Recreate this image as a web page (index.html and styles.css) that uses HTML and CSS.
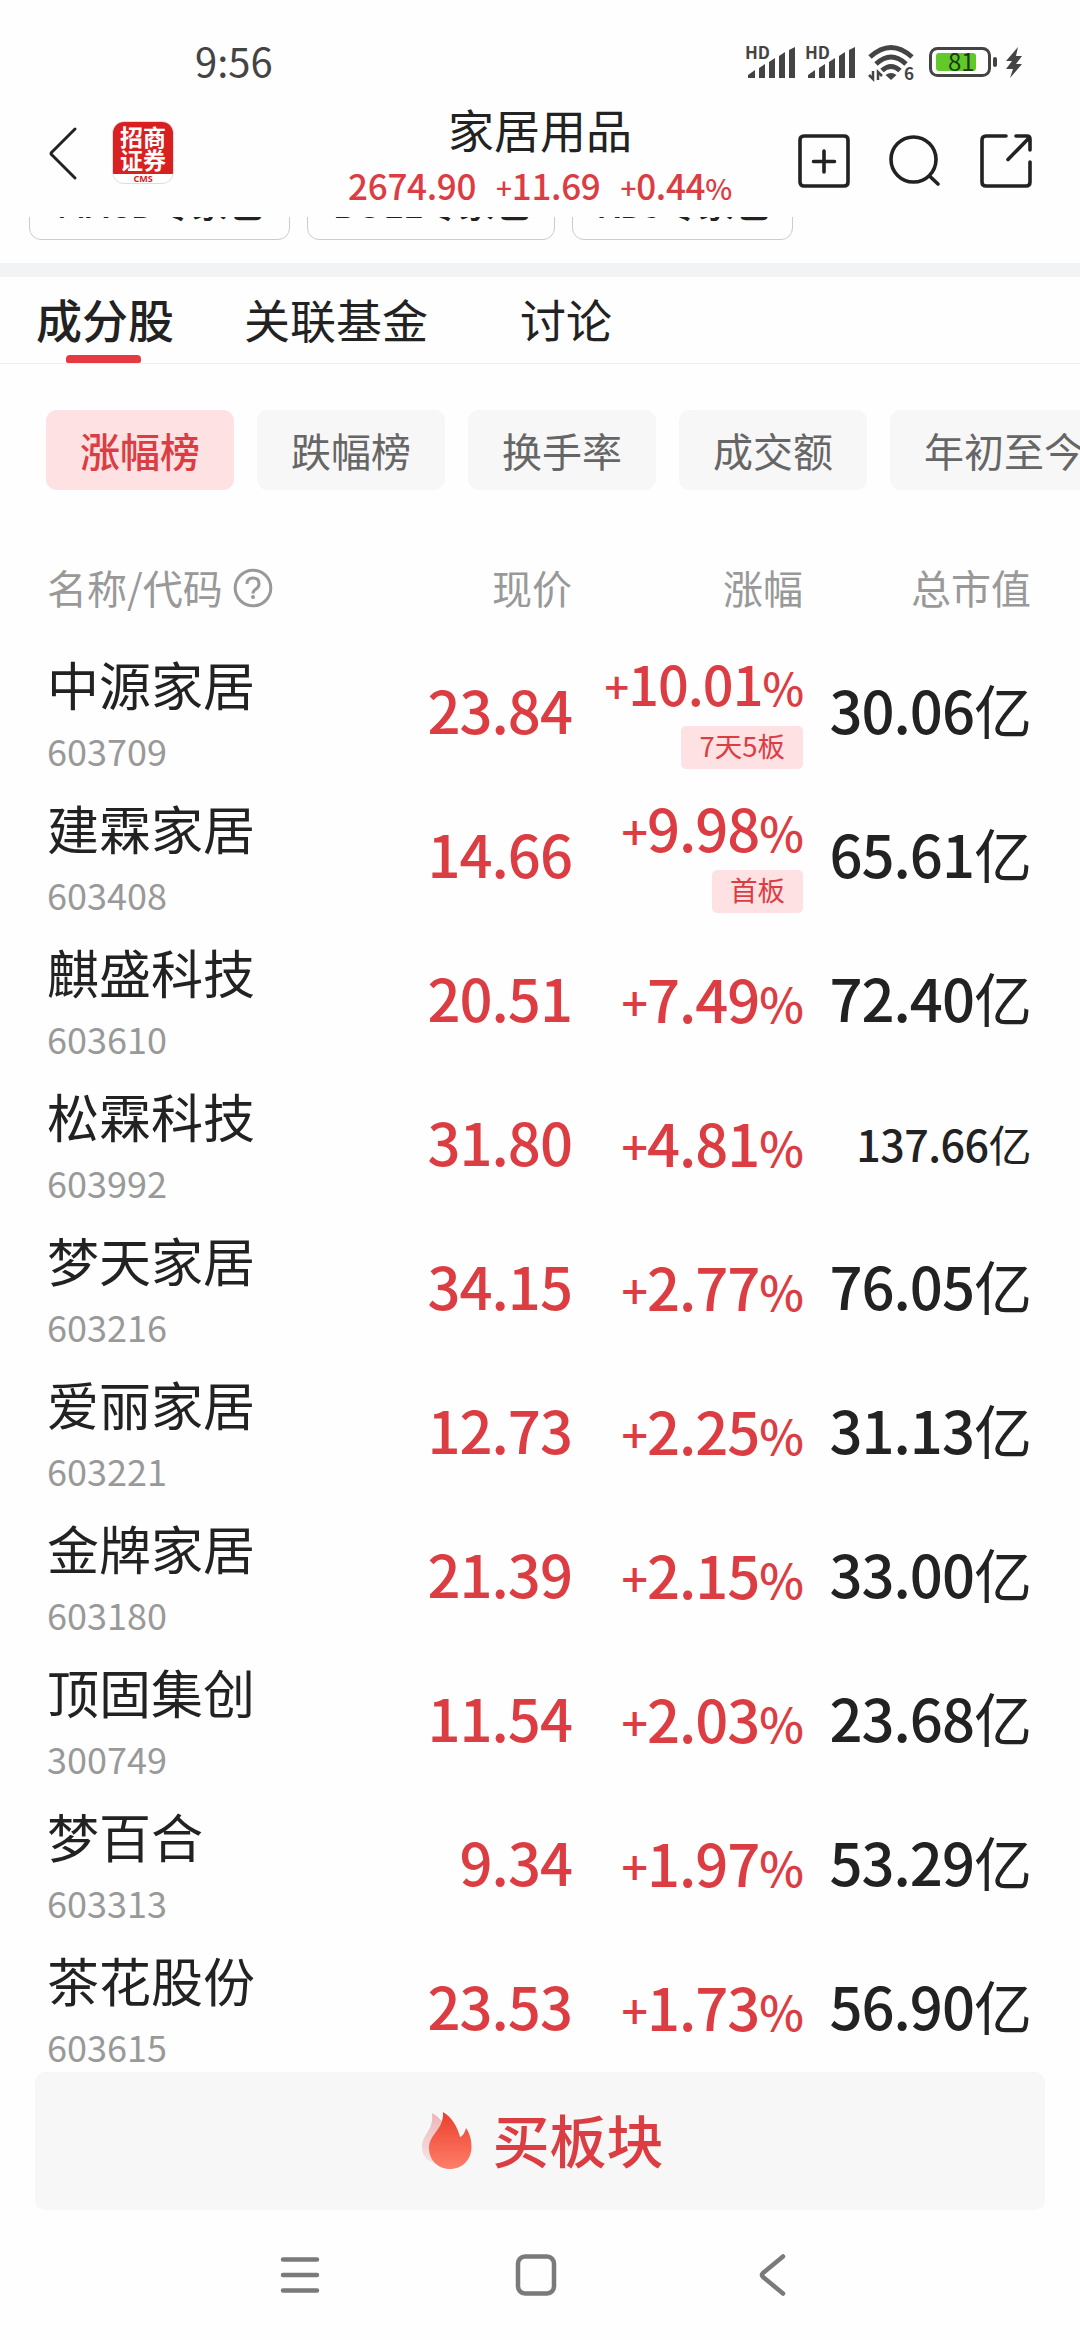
FILE: index.html
```html
<!DOCTYPE html>
<html lang="zh-CN">
<head>
	<meta charset="utf-8">
	<title>家居用品</title>
	<link rel="stylesheet" href="styles.css">
</head>
<body>
	<div class="status">
		<span class="time">9:56</span>
		<div class="status-icons">
			<svg class="signal" width="52" height="40" viewBox="0 0 52 40">
				<text class="hd" x="-2" y="15">HD</text>
				<path d="M1 34v-3l7-5v8zM12 34V24l6-4v14zM22 34V18l6-4v20zM32 34V12l6-4v26zM42 34V6l6-3v31z"/>
			</svg>
			<svg class="signal" width="52" height="40" viewBox="0 0 52 40">
				<text class="hd" x="-2" y="15">HD</text>
				<path d="M1 34v-3l7-5v8zM12 34V24l6-4v14zM22 34V18l6-4v20zM32 34V12l6-4v26zM42 34V6l6-3v31z"/>
			</svg>
			<svg class="wifi" width="48" height="40" viewBox="0 0 48 40">
				<path class="arc" d="M2 13q21-19 42 0M8 20q15-14 30 0M14 26.500q9-8 18 0"/>
				<path d="M17.500 31q5.500-4 11 0l-5.500 5z"/>
				<path class="arrows" d="M5 27v8l-4-4M10 36v-8l4 4"/>
				<text class="six" x="36" y="36">6</text>
			</svg>
			<svg class="battery" width="70" height="40" viewBox="0 0 70 40">
				<rect class="case" x="1.500" y="4.500" width="59" height="27" rx="7"/>
				<rect class="level" x="7" y="9" width="40" height="18" rx="3"/>
				<rect x="64" y="13" width="4" height="10" rx="2"/>
				<text class="percent" x="19" y="26.500">81</text>
			</svg>
			<svg class="bolt" width="20" height="40" viewBox="0 0 20 40">
				<path d="M14 3L2 17h6l-6 8h7L6 34 18 20h-6l6-8h-6z"/>
			</svg>
		</div>
	</div>

	<div class="header">
		<div class="header-left">
			<svg width="30" height="56" viewBox="0 0 30 56">
				<path class="line" d="M27 3L4 26q-2 1.500 0 3L27 52"/>
			</svg>
			<div class="logo">
				<div class="logo-name">招商<br>证券</div>
				<div class="logo-sub">CMS</div>
			</div>
		</div>
		<div class="header-title">
			<div class="title">家居用品</div>
			<div class="index"><span>2674.90</span><span><i class="plus">+</i>11.69</span><span><i class="plus">+</i>0.44<i>%</i></span></div>
		</div>
		<div class="header-right">
			<svg width="52" height="54" viewBox="0 0 52 54">
				<path class="line" d="M6 2h40q4 0 4 4v42q0 4-4 4H6q-4 0-4-4V6q0-4 4-4zM26 17v21M15.500 27.500h21"/>
			</svg>
			<svg width="52" height="54" viewBox="0 0 52 54">
				<circle class="line" cx="24.500" cy="25.500" r="22.500"/>
				<path class="line" d="M40.500 42l8.500 8"/>
			</svg>
			<svg width="52" height="54" viewBox="0 0 52 54">
				<path class="line" d="M26 2H6Q2 2 2 6v42q0 4 4 4h40q4 0 4-4V28M36 2h11q3 0 3 3v11M28 25.500L49 4"/>
			</svg>
		</div>
	</div>

	<div class="packs">
		<div class="pack">MACD专家包</div>
		<div class="pack boll">BOLL专家包</div>
		<div class="pack kdj">KDJ专家包</div>
	</div>

	<div class="tabs">
		<div class="tab active">成分股</div>
		<div class="tab">关联基金</div>
		<div class="tab">讨论</div>
	</div>

	<div class="filters">
		<div class="filter active">涨幅榜</div>
		<div class="filter">跌幅榜</div>
		<div class="filter">换手率</div>
		<div class="filter">成交额</div>
		<div class="filter">年初至今</div>
	</div>

	<div class="row table-head">
		<div class="stock-head">名称/代码
			<svg width="40" height="40" viewBox="0 0 40 40">
				<circle cx="20" cy="20" r="17.800"/>
				<path d="M14 16q0-6 6-6t6 6q0 3-3 5t-3 4.500"/>
				<circle class="dot" cx="20" cy="29" r="2"/>
			</svg>
		</div>
		<div>现价</div>
		<div>涨幅</div>
		<div>总市值</div>
	</div>

	<div class="list">
		<div class="row">
			<div class="stock"><div class="name">中源家居</div><div class="code">603709</div></div>
			<div class="price">23.84</div>
			<div class="change tagged"><div class="small"><i class="plus">+</i>10.01<i>%</i></div><span class="tag">7天5板</span></div>
			<div class="cap">30.06<span>亿</span></div>
		</div>
		<div class="row">
			<div class="stock"><div class="name">建霖家居</div><div class="code">603408</div></div>
			<div class="price">14.66</div>
			<div class="change tagged"><div><i class="plus">+</i>9.98<i>%</i></div><span class="tag">首板</span></div>
			<div class="cap">65.61<span>亿</span></div>
		</div>
		<div class="row">
			<div class="stock"><div class="name">麒盛科技</div><div class="code">603610</div></div>
			<div class="price">20.51</div>
			<div class="change"><i class="plus">+</i>7.49<i>%</i></div>
			<div class="cap">72.40<span>亿</span></div>
		</div>
		<div class="row">
			<div class="stock"><div class="name">松霖科技</div><div class="code">603992</div></div>
			<div class="price">31.80</div>
			<div class="change"><i class="plus">+</i>4.81<i>%</i></div>
			<div class="cap long">137.66<span>亿</span></div>
		</div>
		<div class="row">
			<div class="stock"><div class="name">梦天家居</div><div class="code">603216</div></div>
			<div class="price">34.15</div>
			<div class="change"><i class="plus">+</i>2.77<i>%</i></div>
			<div class="cap">76.05<span>亿</span></div>
		</div>
		<div class="row">
			<div class="stock"><div class="name">爱丽家居</div><div class="code">603221</div></div>
			<div class="price">12.73</div>
			<div class="change"><i class="plus">+</i>2.25<i>%</i></div>
			<div class="cap">31.13<span>亿</span></div>
		</div>
		<div class="row">
			<div class="stock"><div class="name">金牌家居</div><div class="code">603180</div></div>
			<div class="price">21.39</div>
			<div class="change"><i class="plus">+</i>2.15<i>%</i></div>
			<div class="cap">33.00<span>亿</span></div>
		</div>
		<div class="row">
			<div class="stock"><div class="name">顶固集创</div><div class="code">300749</div></div>
			<div class="price">11.54</div>
			<div class="change"><i class="plus">+</i>2.03<i>%</i></div>
			<div class="cap">23.68<span>亿</span></div>
		</div>
		<div class="row">
			<div class="stock"><div class="name">梦百合</div><div class="code">603313</div></div>
			<div class="price">9.34</div>
			<div class="change"><i class="plus">+</i>1.97<i>%</i></div>
			<div class="cap">53.29<span>亿</span></div>
		</div>
		<div class="row">
			<div class="stock"><div class="name">茶花股份</div><div class="code">603615</div></div>
			<div class="price">23.53</div>
			<div class="change"><i class="plus">+</i>1.73<i>%</i></div>
			<div class="cap">56.90<span>亿</span></div>
		</div>
	</div>

	<div class="buy">
		<svg width="50" height="58" viewBox="0 0 50 58">
			<defs>
				<linearGradient id="flame" x1="0" y1="0" x2="0" y2="1">
					<stop offset="0" stop-color="#ea3f2e"/>
					<stop offset="1" stop-color="#ff7f68"/>
				</linearGradient>
				<linearGradient id="shade" x1="0" y1="0" x2="0" y2="1">
					<stop offset="0" stop-color="#eeb4b8"/>
					<stop offset="1" stop-color="#f7e6e6"/>
				</linearGradient>
			</defs>
			<path fill="url(#shade)" d="M10 1c9 5 13 12 16 20l-6 32C6 52 0 44 0 35 0 22 12 19 10 1z"/>
			<path fill="url(#flame)" d="M21 0c9 5 15 16 17 25 3-1 5-5 6-9 4 6 5.500 12 5.500 19C49.500 48 40 57 28 57S7 48 7 36C7 22 22 18 21 0z"/>
		</svg>
		<span>买板块</span>
	</div>

	<div class="nav">
		<svg width="42" height="42" viewBox="0 0 42 42"><path d="M4 5.500h34M4 21h34M4 36.500h34"/></svg>
		<svg width="42" height="42" viewBox="0 0 42 42"><rect x="3" y="2.500" width="36" height="37" rx="7"/></svg>
		<svg width="42" height="42" viewBox="0 0 42 42"><path d="M32 2.500L12 19q-2 2 0 4l20 16.500"/></svg>
	</div>
</body>
</html>
```

FILE: styles.css
```css
*{box-sizing: border-box;}
body{
	margin: 0;
	width: 1080px;height: 2340px;
	overflow: hidden;
	display: flex;flex-direction: column;
	background-color: #fefefe;
	color: #222;
	font-family: "Noto Sans CJK SC", sans-serif;
}
svg{display: block;flex: none;overflow: visible;}
i{font-style: normal;font-size: .82em;line-height: 1;}
.plus{font-size: .8em;vertical-align: .04em;}
.line{fill: none;stroke: #222;stroke-width: 3.6;stroke-linecap: round;stroke-linejoin: round;}

/* phone status bar */
.status{
	height: 104px;flex: none;
	padding: 24px 56px 0 195px;
	display: flex;justify-content: space-between;align-items: center;
	color: #444;
}
.time{font-size: 40px;line-height: 40px;margin-bottom: 9px;}
.status-icons{display: flex;height: 40px;fill: #444;}
.signal{margin-right: 8px;}
.hd{font: bold 17px "Noto Sans CJK SC", sans-serif;}
.wifi{margin: 0 13px 0 1px;}
.arc{fill: none;stroke: #444;stroke-width: 5;}
.arrows{fill: none;stroke: #444;stroke-width: 2.500;}
.six{font-size: 17px;font-weight: bold;}
.case{fill: none;stroke: #444;stroke-width: 3;}
.level{fill: #62c92b;}
.percent{font-size: 24px;fill: #1c3a10;}
.bolt{margin-left: 5px;}

.header{
	height: 113px;flex: none;
	padding: 0 48px;
	display: grid;grid-template-columns: 1fr 400px 1fr;
}
.header-left{display: flex;padding-top: 17px;}
.header-left svg{margin-top: 5px;}
.header-left .line{stroke-width: 3;}
.logo{
	width: 62px;height: 63px;
	margin-left: 34px;
	border: 1px solid #ddd;border-radius: 12px;
	background-color: #fff;
	overflow: hidden;
	text-align: center;
}
.logo-name{
	height: 52px;
	padding-top: 3px;
	background-color: #d91f20;
	color: #fff;
	font-size: 23px;line-height: 23px;font-weight: bold;
}
.logo-sub{color: #d22;font: bold 9px/9px "Noto Sans", sans-serif;}
.header-title{text-align: center;}
.title{font-size: 46px;line-height: 54px;height: 51px;margin-top: -3px;}
.index{
	display: flex;justify-content: center;gap: 20px;
	font-size: 35px;line-height: 66px;font-weight: 500;letter-spacing: -.3px;
	color: #dc3d42;
}
.header-right{display: flex;justify-content: flex-end;gap: 39px;padding-top: 30px;}

/* scrolled halfway under the header */
.packs{
	height: 60px;flex: none;
	padding-left: 29px;
	display: flex;align-items: flex-end;gap: 17px;
	overflow: hidden;
	border-bottom: 14px solid #f2f3f5;
}
.pack{
	width: 261px;height: 70px;
	margin-bottom: 23px;
	border: 1px solid #ccc;border-radius: 12px;
	font-size: 36px;line-height: 63px;font-weight: 500;letter-spacing: -.3px;
	text-align: center;
	white-space: nowrap;
}
.boll{width: 248px;}
.kdj{width: 221px;}

.tabs{
	height: 87px;flex: none;
	padding: 0 36px;
	display: flex;
	border-bottom: 1px solid #efefef;
	font-size: 46px;line-height: 82px;
}
.tab{margin-right: 70px;}
.tab + .tab + .tab{margin-left: 22px;}
.tab.active{font-weight: 500;position: relative;}
.tab.active::after{
	content: "";
	position: absolute;left: 30px;bottom: 0;
	width: 75px;height: 8px;
	border-radius: 4px 4px 2px 2px;
	background-color: #e63a41;
}

.filters{
	flex: none;
	padding: 46px 0 0 46px;
	display: flex;gap: 23px;
}
.filter{
	height: 80px;flex: none;
	padding: 0 34px;
	border-radius: 11px;
	background-color: #f7f7f7;
	color: #666;
	font-size: 40px;line-height: 80px;
}
.filter.active{background-color: #fde1e3;color: #dc3d42;font-weight: 500;}

.row{
	height: 144px;flex: none;
	padding: 0 49px 0 47px;
	display: grid;grid-template-columns: 304px 221px 231px 228px;
	text-align: right;
	white-space: nowrap;
}
.table-head{
	height: 150px;
	padding-top: 68px;
	color: #999;
	font-size: 40px;line-height: 58px;
}
.stock-head{display: flex;align-items: center;gap: 10px;height: 58px;}
.stock-head svg{fill: none;stroke: #999;stroke-width: 3;margin-top: 1px;}
.stock-head .dot{fill: #999;stroke: none;}

.list{height: 1432px;flex: none;overflow: hidden;}
.stock{text-align: left;}
.name{font-size: 52px;line-height: 60px;padding-top: 14px;}
.code{font-size: 36px;line-height: 73px;color: #999;}
.price, .change, .cap{font-size: 58px;line-height: 138px;font-weight: 500;letter-spacing: -1px;}
.price, .change{color: #dc3d42;}
.change{line-height: 141px;}
.cap span{font-weight: normal;}
.cap.long{font-size: 43px;letter-spacing: -.5px;line-height: 142px;}
.tagged{display: flex;flex-direction: column;align-items: flex-end;line-height: 86px;}
.small{font-size: 54px;}
.tag{
	height: 43px;
	padding: 0 18px;
	border-radius: 5px;
	background-color: #fde1e3;
	font-size: 27.500px;line-height: 38px;font-weight: normal;letter-spacing: 0;
}

.buy{
	height: 138px;flex: none;
	margin: 0 35px;
	padding-left: 5px;
	display: flex;align-items: center;justify-content: center;gap: 21px;
	border-radius: 10px;
	background-color: #f7f7f7;
	color: #dc3d42;
	font-size: 57px;font-weight: 500;
}
.buy span{margin-bottom: 6px;}

.nav{
	padding: 44px 0 0 279px;
	display: flex;gap: 194px;
}
.nav svg{fill: none;stroke: #7a7a7a;stroke-width: 4.500;stroke-linecap: round;}
```
